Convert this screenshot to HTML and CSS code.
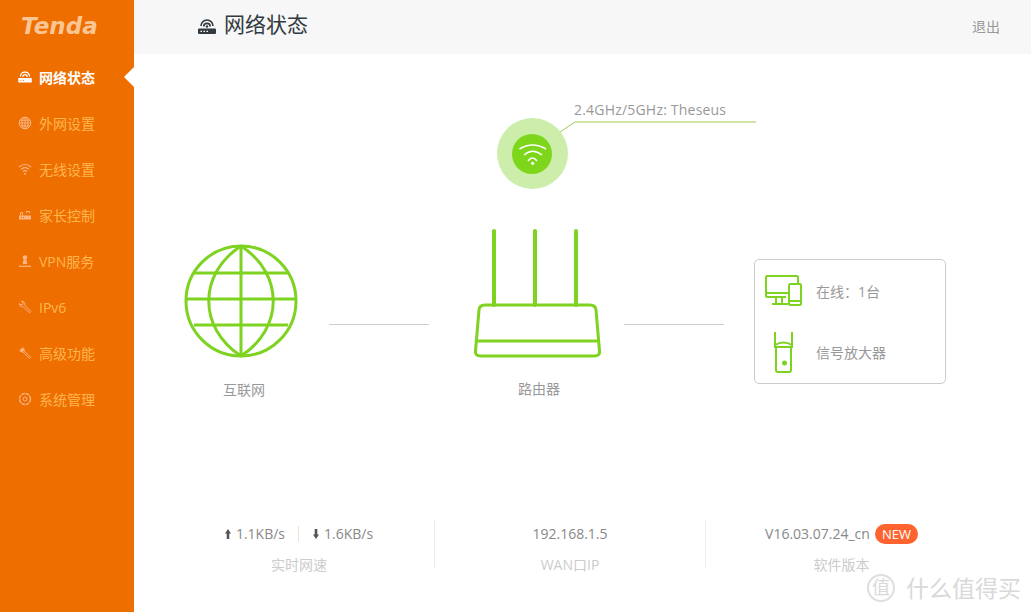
FILE: index.html
```html
<!DOCTYPE html>
<html lang="zh-CN">
<head>
<meta charset="utf-8">
<title>网络状态</title>
<link rel="stylesheet" href="styles.css">
</head>
<body>
<div class="app">
  <aside class="sidebar">
    <div class="logo">Tenda</div>
    <nav class="nav">
      <a class="nav-item active">
        <svg class="nav-icon" viewBox="0 0 14 14"><path d="M2.500 6.500a4.500 4.500 0 0 1 9 0M4.800 6.800a2.200 2.200 0 0 1 4.400 0" fill="none" stroke="currentColor" stroke-width="1.300"/><path d="M.8 8h12.400a.6.6 0 0 1 .6.6v3.200a.6.6 0 0 1-.6.6H.8a.6.6 0 0 1-.6-.6V8.600a.6.6 0 0 1 .6-.6z" fill="currentColor"/><path d="M2.500 10.300h1M5 10.300h1" stroke="#ee6e00"/></svg>
        <span>网络状态</span>
      </a>
      <a class="nav-item">
        <svg class="nav-icon" viewBox="0 0 14 14"><g fill="none" stroke="currentColor"><circle cx="7" cy="7" r="5.800"/><ellipse cx="7" cy="7" rx="3" ry="5.800"/><path d="M7 1v12M1.200 7h11.600M2 4.200h10M2 9.800h10"/></g></svg>
        <span>外网设置</span>
      </a>
      <a class="nav-item">
        <svg class="nav-icon" viewBox="0 0 14 14"><g fill="none" stroke="currentColor" stroke-width="1.100"><path d="M1 5a8.500 8.500 0 0 1 12 0M3 7.300a5.600 5.600 0 0 1 8 0M5 9.500a2.800 2.800 0 0 1 4 0"/></g><circle cx="7" cy="11.800" r="1" fill="currentColor"/></svg>
        <span>无线设置</span>
      </a>
      <a class="nav-item">
        <svg class="nav-icon" viewBox="0 0 14 14"><path d="M1 7.500h12v4H1z" fill="currentColor"/><path d="M2.500 7.500V4.500h2v3M8.500 5V3.500h3V5" fill="none" stroke="currentColor"/><path d="M3 9.500h1M5 9.500h1" stroke="#ee6e00"/></svg>
        <span>家长控制</span>
      </a>
      <a class="nav-item">
        <svg class="nav-icon" viewBox="0 0 14 14"><circle cx="7" cy="3.500" r="2.300" fill="currentColor"/><path d="M5.500 5.500h3l.8 4.500H4.700z" fill="currentColor"/><path d="M1 12.300h12" stroke="currentColor" stroke-width="1.200"/></svg>
        <span>VPN服务</span>
      </a>
      <a class="nav-item">
        <svg class="nav-icon" viewBox="0 0 14 14"><path d="M1.500 3.500 3 5l1.800-.5L5 2.800 3.500 1.300a3 3 0 0 1 3.300 4l5.500 5.500a1 1 0 0 1-1.500 1.500L5.300 6.800a3 3 0 0 1-3.800-3.300z" fill="none" stroke="currentColor"/></svg>
        <span>IPv6</span>
      </a>
      <a class="nav-item">
        <svg class="nav-icon" viewBox="0 0 14 14"><path d="M6 5l6.800 6.300-1.300 1.300L5 6" fill="none" stroke="currentColor"/><path d="M1.200 4.800 4.800 1.200l2.200 2.300-2.800 3.200z" fill="currentColor"/></svg>
        <span>高级功能</span>
      </a>
      <a class="nav-item">
        <svg class="nav-icon" viewBox="0 0 14 14"><g fill="none" stroke="currentColor"><circle cx="7" cy="7" r="5.500" stroke-width="1.400" stroke-dasharray="3.500 .8"/><circle cx="7" cy="7" r="2"/></g></svg>
        <span>系统管理</span>
      </a>
    </nav>
  </aside>

  <main class="main">
    <header class="topbar">
      <div class="page-title">
        <svg class="title-icon" viewBox="0 0 18 16"><g fill="none" stroke="#333b42" stroke-width="1.700"><path d="M3 8a6 6 0 0 1 12 0M5.800 8.500a3.200 3.200 0 0 1 6.400 0"/></g><circle cx="9" cy="8.500" r="1.200" fill="#333b42"/><path d="M1 10.500h16a1 1 0 0 1 1 1V15a1 1 0 0 1-1 1H1a1 1 0 0 1-1-1v-3.500a1 1 0 0 1 1-1z" fill="#333b42"/><path d="M2.500 13.300h1.500M5.500 13.300h1.500M8.500 13.300h1.500" stroke="#fff" stroke-width="1.300"/></svg>
        <h1>网络状态</h1>
      </div>
      <a class="logout">退出</a>
    </header>

    <section class="stage">
      <svg class="node wifi-node" viewBox="0 0 262 92">
        <path d="M52 40 79 22H260" fill="none" stroke="#9ecb4d"/>
        <circle cx="36.500" cy="53.500" r="35.500" fill="#cdeeab"/>
        <circle cx="36" cy="54" r="20" fill="#7ed61a"/>
        <g fill="none" stroke="#fff" stroke-width="1.500">
          <path d="M23.500 49Q36.500 41 50 49M28 55Q36.500 47.500 46 55M32 61Q36.500 55 41 61"/>
        </g>
        <circle cx="36.700" cy="63.300" r="1.600" fill="#fff"/>
      </svg>
      <div class="node ssid">2.4GHz/5GHz: Theseus</div>

      <svg class="node globe" viewBox="0 0 116 116">
        <g fill="none" stroke="#7ed321" stroke-width="3">
          <circle cx="57" cy="57" r="55"/>
          <path d="M57 2C14 30 14 84 57 112C100 84 100 30 57 2M57 2V112M2 55H112M10 29H104M10 81H104"/>
        </g>
      </svg>
      <div class="node caption cap-internet">互联网</div>
      <div class="node link link-left"></div>

      <svg class="node router" viewBox="0 0 128 132">
        <g fill="none" stroke="#7ed321" stroke-width="3" stroke-linecap="round" stroke-linejoin="round">
          <path d="M21 3V77M62 3V77M103 3V77" stroke-width="4"/>
          <path d="M12 77H117Q122.500 77 123 82L126.500 123Q127 128 121.500 128H7.500Q2 128 2.500 123L6 82Q6.500 77 12 77Z"/>
          <path d="M4 113H125"/>
        </g>
      </svg>
      <div class="node caption cap-router">路由器</div>
      <div class="node link link-right"></div>

      <div class="node devices">
        <div class="device-row">
          <svg class="device-icon" viewBox="0 0 38 32">
            <g fill="none" stroke="#7ed321" stroke-width="2">
              <path d="M21 22H2.500Q1 22 1 20.500V2.500Q1 1 2.500 1H31.500Q33 1 33 2.500V8"/>
              <path d="M1 18H23M11 22V28M7 29H23M17 22V28"/>
              <rect x="24" y="9" width="12" height="21" rx="1.500"/>
              <path d="M24 26H36"/>
            </g>
          </svg>
          <span>在线：1台</span>
        </div>
        <div class="device-row">
          <svg class="device-icon" viewBox="0 0 38 42">
            <g fill="none" stroke="#7ed321" stroke-width="2">
              <path d="M10 1V17M27 1V17"/>
              <path d="M10 14Q18.500 9 27 14"/>
              <path d="M11 16H26V39Q26 41 24 41H13Q11 41 11 39Z"/>
            </g>
            <circle cx="19.500" cy="32" r="2.500" fill="#7ed321"/>
          </svg>
          <span>信号放大器</span>
        </div>
      </div>
    </section>

    <section class="stats">
      <div class="stat">
        <div class="stat-value">
          <svg class="arrow" viewBox="0 0 6 10"><path d="M3 0 6 4.500H4.300V10H1.700V4.500H0z"/></svg>1.1KB/s<i class="rate-sep"></i><svg class="arrow" viewBox="0 0 6 10"><path d="M3 10 6 5.500H4.300V0H1.700V5.500H0z"/></svg>1.6KB/s
        </div>
        <div class="stat-label">实时网速</div>
      </div>
      <div class="stat">
        <div class="stat-value">192.168.1.5</div>
        <div class="stat-label">WAN口IP</div>
      </div>
      <div class="stat">
        <div class="stat-value">V16.03.07.24_cn<span class="badge">NEW</span></div>
        <div class="stat-label">软件版本</div>
      </div>
    </section>
  </main>
</div>
<div class="watermark">
  <span class="wm-seal">值</span>
  <span class="wm-text">什么值得买</span>
</div>
</body>
</html>
```
FILE: styles.css
```css
* { box-sizing: border-box; }
html, body { margin: 0; height: 100%; overflow: hidden; background: #fff; }
body {
  font-family: "Open Sans", "Noto Sans CJK SC", sans-serif;
  font-size: 14px;
  color: #888;
}
.app { display: flex; height: 612px; }

.sidebar { width: 134px; flex: none; background: #ee6e00; }
.logo {
  height: 54px;
  padding: 11px 0 0 21px;
  font-family: "DejaVu Sans", sans-serif;
  font-style: italic;
  font-weight: bold;
  font-size: 23px;
  line-height: 30px;
  letter-spacing: 0;
  color: #fbc594;
}
.nav { display: flex; flex-direction: column; }
.nav-item {
  position: relative;
  display: flex;
  align-items: center;
  gap: 7px;
  height: 46px;
  padding-left: 18px;
  color: #ffb650;
}
.nav-item .nav-icon { color: #fab583; }
.nav-icon { width: 14px; height: 14px; flex: none; }
.nav-item.active, .nav-item.active .nav-icon { color: #fff; font-weight: bold; }
.nav-item.active::after {
  content: "";
  position: absolute;
  right: 0;
  top: 13px;
  border: 10px solid transparent;
  border-left-width: 0;
  border-right-color: #fff;
}

.main { flex: 1; min-width: 0; display: flex; flex-direction: column; }
.topbar {
  height: 54px;
  flex: none;
  display: flex;
  align-items: center;
  justify-content: space-between;
  padding: 0 31px 0 64px;
  background: #f7f7f7;
}
.page-title { display: flex; align-items: center; gap: 8px; margin-bottom: 6px; }
.title-icon { width: 18px; height: 16px; margin-top: 4px; }
.page-title h1 { margin: 0; font-size: 21px; font-weight: normal; color: #333b42; line-height: 28px; }
.logout { font-size: 14px; color: #999; margin-bottom: 2px; }

.stage { position: relative; flex: 1; }
.node { position: absolute; }
.wifi-node { left: 362px; top: 46px; width: 262px; height: 92px; }
.ssid { left: 440px; top: 46px; line-height: 20px; color: #999; white-space: nowrap; letter-spacing: .2px; }
.globe { left: 50px; top: 190px; width: 116px; height: 116px; }
.router { left: 339px; top: 174px; width: 128px; height: 132px; }
.caption { line-height: 20px; color: #999; }
.cap-internet { left: 89px; top: 326px; }
.cap-router { left: 384px; top: 325px; }
.link { height: 1px; width: 100px; background: #ccc; top: 270px; }
.link-left { left: 195px; }
.link-right { left: 490px; }

.devices {
  left: 620px;
  top: 205px;
  width: 192px;
  height: 125px;
  border: 1px solid #ccc;
  border-radius: 5px;
  display: flex;
  flex-direction: column;
}
.device-row {
  display: flex;
  align-items: center;
  gap: 13px;
  padding-left: 10px;
  color: #999;
}
.device-row:first-child { height: 62px; }
.device-row:last-child { height: 60px; }
.device-icon { width: 38px; flex: none; }
.device-row:first-child .device-icon { height: 32px; }
.device-row:last-child .device-icon { height: 42px; margin-top: -1px; }

.stats {
  flex: none;
  display: grid;
  grid-template-columns: repeat(3, 271px);
  padding-left: 30px;
  margin-bottom: 44px;
}
.stat {
  height: 48px;
  display: flex;
  flex-direction: column;
  align-items: center;
  border-right: 1px solid #eee;
}
.stat:last-child { border-right: 0; }
.stat-value { display: flex; align-items: center; height: 28px; line-height: 28px; color: #888; flex: none; }
.stat-label { color: #ccc; line-height: 20px; margin-top: 7px; flex: none; }
.arrow { width: 6px; height: 10px; fill: #555; margin-right: 5px; }
.rate-sep { width: 1px; height: 16px; background: #f5dfd2; margin: 0 14px 0 13px; }
.badge {
  display: inline-block;
  height: 20px;
  line-height: 20px;
  margin-left: 5px;
  padding: 0 7px;
  border-radius: 10px;
  background: #ff6430;
  color: #fff;
  font-size: 13px;
}

.watermark {
  position: absolute;
  left: 867px;
  top: 573px;
  display: flex;
  align-items: center;
  gap: 11px;
  color: #d9d9d9;
}
.wm-seal {
  width: 28px;
  height: 28px;
  border: 2px solid #dedede;
  border-radius: 50%;
  text-align: center;
  font-size: 18px;
  line-height: 23px;
}
.wm-text { font-size: 23px; line-height: 30px; white-space: nowrap; }
```
